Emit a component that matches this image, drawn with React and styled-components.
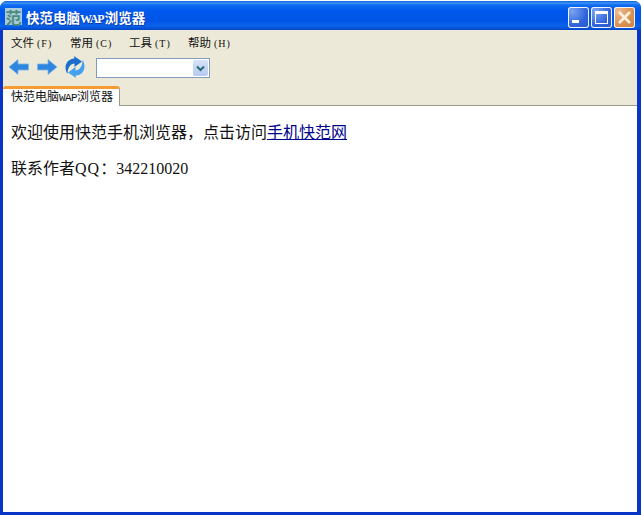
import React from "react";
import styled, { createGlobalStyle } from "styled-components";

const GlobalStyle = createGlobalStyle`
  html, body {
    margin: 0;
    padding: 0;
    background: #fff;
  }
`;

const serif = `"Liberation Serif", "Noto Sans CJK SC", serif`;

const menus = [
  ["文件", "(F)"],
  ["常用", "(C)"],
  ["工具", "(T)"],
  ["帮助", "(H)"],
];

function App() {
  return (
    <>
      <GlobalStyle />
      <Win>
        <TitleBar>
          <AppIcon>范</AppIcon>
          <TitleText>
            快范电脑<TitleLatin>WAP</TitleLatin>浏览器
          </TitleText>
          <WinButtons>
            <WinButton>
              <svg width="21" height="21" viewBox="0 0 21 21">
                <rect x="4" y="13" width="7" height="3" fill="#fff" />
              </svg>
            </WinButton>
            <WinButton>
              <svg width="21" height="21" viewBox="0 0 21 21">
                <rect x="4.5" y="5.5" width="12" height="11" fill="none" stroke="#fff" />
                <rect x="4" y="4" width="13" height="3" fill="#fff" />
              </svg>
            </WinButton>
            <WinButton $close>
              <svg width="21" height="21" viewBox="0 0 21 21">
                <path d="M5 5L16 16M16 5L5 16" stroke="#fff3e0" strokeWidth="2.6" fill="none" />
              </svg>
            </WinButton>
          </WinButtons>
        </TitleBar>
        <Client>
          <MenuBar>
            {menus.map(([name, key]) => (
              <MenuItem key={name}>
                {name}
                <MenuKey>{key}</MenuKey>
              </MenuItem>
            ))}
          </MenuBar>
          <ToolBar>
            <ToolIcon>
              <svg width="22" height="20" viewBox="0 0 22 20">
                <path d="M1 10L10 2.5V7H20.5V13H10V17.5Z" fill="#2f86de" stroke="#7fb4ea" strokeWidth="0.8" />
              </svg>
            </ToolIcon>
            <ToolIcon>
              <svg width="22" height="20" viewBox="0 0 22 20">
                <path d="M21 10L12 2.5V7H1.5V13H12V17.5Z" fill="#2f86de" stroke="#7fb4ea" strokeWidth="0.8" />
              </svg>
            </ToolIcon>
            <ToolIcon>
              <svg width="22" height="22" viewBox="0 0 22 22">
                <path d="M3.5 18C-0.5 12 1.5 3 10.5 2.4L10 0L18 5.5L10.5 11L10.5 7.5C6.5 7.5 3.5 12 3.5 18Z" fill="#1a6dcc" />
                <path d="M18.5 4C22.5 10 20.5 19 11.5 19.6L12 22L4 16.5L11.5 11L11.5 14.5C15.5 14.5 18.5 10 18.5 4Z" fill="#45a0ee" />
              </svg>
            </ToolIcon>
            <AddressBox>
              <DropButton>
                <svg width="9" height="7" viewBox="0 0 9 7">
                  <path d="M1 1.5L4.5 5L8 1.5" fill="none" stroke="#2d6a78" strokeWidth="2" />
                </svg>
              </DropButton>
            </AddressBox>
          </ToolBar>
          <TabStrip>
            <Tab>
              快范电脑<TabLatin>WAP</TabLatin>浏览器
            </Tab>
          </TabStrip>
          <Page>
            <Line>
              欢迎使用快范手机浏览器，点击访问<PageLink href="#">手机快范网</PageLink>
            </Line>
            <Line>
              联系作者<Spaced>QQ</Spaced>：342210020
            </Line>
          </Page>
        </Client>
      </Win>
    </>
  );
}

export default App;

const Win = styled.div`
  width: 641px;
  height: 514px;
  margin-top: 1px;
  box-sizing: border-box;
  display: flex;
  flex-direction: column;
  background: #0a36c8;
  border-radius: 7px 7px 0 0;
  overflow: hidden;
`;

const TitleBar = styled.div`
  height: 29px;
  flex: none;
  box-sizing: border-box;
  display: flex;
  align-items: center;
  padding: 0 6px 0 5px;
  background: linear-gradient(
    180deg,
    #0a5fe0 0,
    #3f94f5 2px,
    #0f6cf0 4px,
    #0058ee 10px,
    #0055e5 20px,
    #0a63ea 25px,
    #0046c8 29px
  );
`;

const AppIcon = styled.span`
  width: 17px;
  height: 17px;
  flex: none;
  display: flex;
  align-items: center;
  justify-content: center;
  margin-top: 2px;
  font: 700 16px "Noto Sans CJK SC", sans-serif;
  color: #4f8c78;
  background: #a8cbe0;
`;

const TitleText = styled.span`
  margin-left: 4px;
  margin-top: 2px;
  font: 700 13.5px ${serif};
  color: #fff;
  text-shadow: 1px 1px 0 #0b3da8;
  white-space: nowrap;
`;

const TitleLatin = styled.span`
  font-size: 12px;
  letter-spacing: -1px;
  margin: 0 1px 0 0;
`;

const WinButtons = styled.div`
  margin-left: auto;
  display: flex;
  gap: 2px;
  margin-top: 4px;
`;

const WinButton = styled.span`
  width: 21px;
  height: 21px;
  display: block;
  border-radius: 3px;
  background: ${(p) =>
    p.$close
      ? "radial-gradient(circle at 20% 20%, #eeb98c, #d8904f 60%, #c87e42)"
      : "radial-gradient(circle at 20% 20%, #7aa5f0, #2f63dc 60%, #2a57c8)"};
  box-shadow: inset 0 0 0 1px #f2f5fc;

  svg {
    display: block;
  }
`;

const Client = styled.div`
  flex: 1;
  min-height: 0;
  margin: 0 4px 3px 3px;
  display: flex;
  flex-direction: column;
  background: #ece9d8;
`;

const MenuBar = styled.div`
  height: 24px;
  flex: none;
  display: flex;
  align-items: center;
  padding-left: 8px;
  gap: 17px;
  font: 11.5px ${serif};
  color: #111;
`;

const MenuItem = styled.span`
  width: 42px;
  white-space: nowrap;
`;

const MenuKey = styled.span`
  margin-left: 3px;
  font-size: 10px;
  letter-spacing: 1px;
`;

const ToolBar = styled.div`
  height: 26px;
  flex: none;
  display: flex;
  align-items: center;
  padding-left: 5px;
  gap: 6px;
`;

const ToolIcon = styled.span`
  width: 22px;
  height: 22px;
  display: flex;
  align-items: center;
  justify-content: center;
`;

const AddressBox = styled.div`
  width: 111px;
  height: 18px;
  margin: 2px 0 0 4px;
  display: flex;
  justify-content: flex-end;
  align-items: center;
  padding-right: 1px;
  background: #fff;
  border: 1px solid #7f9db9;
`;

const DropButton = styled.span`
  width: 15px;
  height: 16px;
  display: flex;
  align-items: center;
  justify-content: center;
  border-radius: 2px;
  background: linear-gradient(180deg, #d6e2f8, #b5cbf0);
  box-sizing: border-box;
`;

const TabStrip = styled.div`
  height: 25px;
  flex: none;
  display: flex;
  align-items: flex-end;
  box-sizing: border-box;
  margin-top: 1px;
  border-bottom: 1px solid #9c9a8c;
`;

const Tab = styled.div`
  height: 20px;
  margin-bottom: -1px;
  box-sizing: border-box;
  padding: 1px 6px 0 8px;
  background: #fff;
  border-top: 3px solid #f59b32;
  border-right: 1px solid #9c9a8c;
  border-radius: 3px 3px 0 0;
  font: 12px ${serif};
  line-height: 14px;
  color: #111;
  white-space: nowrap;
`;

const TabLatin = styled.span`
  font: 11px "Liberation Mono", monospace;
  letter-spacing: -0.6px;
`;

const Page = styled.div`
  flex: 1;
  min-height: 0;
  background: #fff;
  padding: 17px 8px 0;
  font: 16px ${serif};
  line-height: 20px;
  color: #111;
`;

const Line = styled.p`
  margin: 0 0 16px;
`;

const Spaced = styled.span`
  letter-spacing: 1px;
`;

const PageLink = styled.a`
  color: #00008b;
  text-decoration: underline;
`;
